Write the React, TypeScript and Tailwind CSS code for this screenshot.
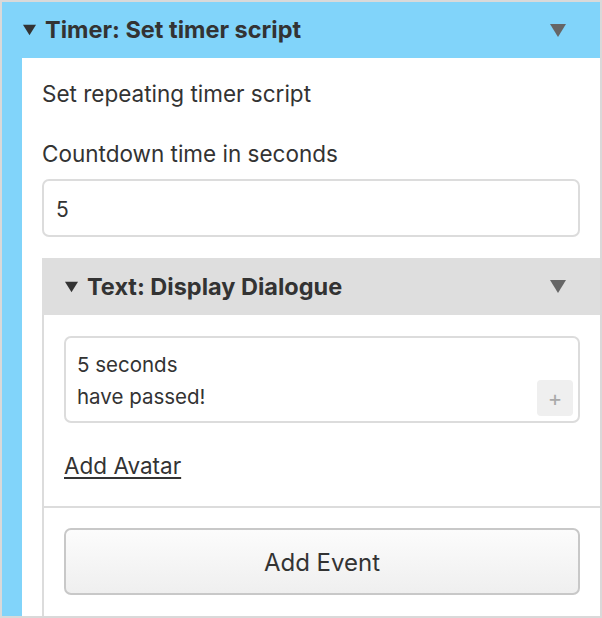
import { useState } from "react";

const Tri = ({ className }: { className: string }) => (
    <svg viewBox="0 0 16 13" className={className}>
        <path d="M0 0 H16 L8 13 Z" fill="currentColor" />
    </svg>
);

export default function App() {
    const [seconds, setSeconds] = useState("5");
    const [text, setText] = useState("5 seconds\nhave passed!");

    return (
        <div
            className="w-[602px] h-[618px] border-2 border-[#d9d9d9] bg-[#81d4fa] flex flex-col overflow-hidden text-[#333]"
            style={{ fontFamily: "Inter, 'Noto Sans', sans-serif" }}
        >
            {/* outer header */}
            <div className="h-[56px] shrink-0 flex items-center pl-[21px] pr-[34px]">
                <Tri className="w-[13px] h-[12px] text-[#333] mr-[9px]" />
                <span className="text-[23.5px] font-bold">Timer: Set timer script</span>
                <Tri className="w-[16px] h-[13px] text-[#666] ml-auto" />
            </div>

            {/* outer body */}
            <div className="flex-1 ml-[20px] bg-white pt-[21px] pl-[20px] pr-[20px] flex flex-col">
                <div className="text-[22.5px] leading-[30px]">Set repeating timer script</div>
                <div className="text-[22.5px] leading-[30px] mt-[30px]">Countdown time in seconds</div>
                <input
                    type="text"
                    value={seconds}
                    onChange={e => setSeconds(e.target.value)}
                    className="mt-[10px] h-[58px] w-full border-2 border-[#dcdcdc] rounded-[7px] px-[12px] pt-[3px] text-[21px] outline-none"
                />

                {/* inner card */}
                <div className="mt-[21px] -mr-[20px] flex-1 flex flex-col border-l-2 border-[#dcdcdc]">
                    <div className="h-[57px] -ml-[2px] bg-[#dedede] flex items-center pl-[23px] pr-[34px]">
                        <Tri className="w-[13px] h-[12px] text-[#333] mr-[9px]" />
                        <span className="text-[23.5px] font-bold">Text: Display Dialogue</span>
                        <Tri className="w-[16px] h-[13px] text-[#666] ml-auto" />
                    </div>
                    <div className="pl-[20px] pr-[20px] pt-[21px] pb-[25px]">
                        <div className="relative">
                            <textarea
                                value={text}
                                onChange={e => setText(e.target.value)}
                                className="block w-full h-[87px] resize-none border-2 border-[#dcdcdc] rounded-[7px] px-[11px] pt-[11px] pb-[9px] text-[20.5px] leading-[32px] outline-none"
                            />
                            <button className="absolute right-[7px] bottom-[7px] w-[36px] h-[36px] rounded-[4px] bg-[#efefef] text-[#aaa] text-[22px] leading-none flex items-center justify-center">
                                +
                            </button>
                        </div>
                        <a href="#" className="block w-fit mt-[28px] text-[22.5px] leading-[30px] underline underline-offset-[3px]">
                            Add Avatar
                        </a>
                    </div>
                    <div className="border-t-2 border-[#dcdcdc] pt-[20px] pl-[20px] pr-[20px] flex-1">
                        <button className="w-full h-[67px] pt-[3px] border-2 border-[#c8c8c8] rounded-[7px] bg-gradient-to-b from-[#fcfcfc] to-[#efefef] text-[24px] text-[#333]">
                            Add Event
                        </button>
                    </div>
                </div>
            </div>
        </div>
    );
}
